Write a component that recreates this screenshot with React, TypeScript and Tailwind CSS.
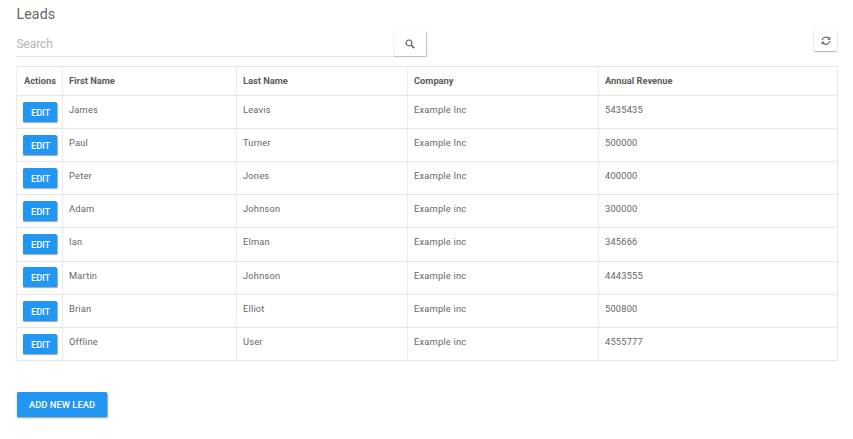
import React from "react";

const leads = [
  ["James", "Leavis", "Example Inc", "5435435"],
  ["Paul", "Turner", "Example Inc", "500000"],
  ["Peter", "Jones", "Example Inc", "400000"],
  ["Adam", "Johnson", "Example inc", "300000"],
  ["Ian", "Elman", "Example inc", "345666"],
  ["Martin", "Johnson", "Example inc", "4443555"],
  ["Brian", "Elliot", "Example inc", "500800"],
  ["Offline", "User", "Example inc", "4555777"],
];

function SearchIcon() {
  return (
    <svg width="10" height="10" viewBox="0 0 10 10" fill="none" stroke="#666" strokeWidth="1.2">
      <circle cx="4" cy="3.9" r="2.9" />
      <path d="M6.2 6.1 9.2 9.1" strokeWidth="1.5" />
    </svg>
  );
}

function RefreshIcon() {
  return (
    <svg width="10" height="10" viewBox="0 0 10 10" fill="none" stroke="#666" strokeWidth="1.2">
      <path d="M1.1 4.2A4 4 0 0 1 7.9 2.3M8.9 5.2A4 4 0 0 1 2.1 7.1" />
      <path d="M9.4.4v3.3H6.1zM.6 9V5.7h3.3z" fill="#666" stroke="none" />
    </svg>
  );
}

export default function App() {
  return (
    <main className="h-[439px] w-[853px] overflow-hidden bg-white pl-4 pt-1 font-[Roboto,sans-serif] text-[#666]">
      <h1 className="h-5 pl-[0.5px] text-[14.2px] leading-5 tracking-[0.1px]">Leads</h1>
      <div className="mt-1.5 flex h-[27px] w-[821px] items-start">
        <input
          placeholder="Search"
          className="h-[27px] w-[378px] border-b border-[#e4e4e4] pl-[0.5px] pt-0.5 text-[12px] tracking-[-0.1px] outline-none placeholder:text-[#b5b5b5]"
        />
        <button className="mt-px flex h-[25px] w-8 items-center justify-center rounded-[1px] bg-white shadow-[0_0_1px_rgba(0,0,0,0.25),0.5px_1px_1px_rgba(0,0,0,0.25)]">
          <SearchIcon />
        </button>
        <button className="ml-auto mt-px flex h-5 w-[23px] items-center justify-center rounded-[1px] bg-white shadow-[0_0_1px_rgba(0,0,0,0.2),0_1px_1.5px_rgba(0,0,0,0.3)]">
          <RefreshIcon />
        </button>
      </div>
      <table className="mt-[9px] w-[822px] table-fixed border-separate border-spacing-0 border-l border-t border-l-[#ededed] border-t-[#e6e6e6] text-left">
        <colgroup>
          <col className="w-[46px]" />
          <col className="w-[174px]" />
          <col className="w-[171px]" />
          <col className="w-[191px]" />
          <col />
        </colgroup>
        <thead>
          <tr className="h-[29px] text-[9.3px] leading-3 text-[#5c5c5c]">
            {["Actions", "First Name", "Last Name", "Company", "Annual Revenue"].map((name, i) => (
              <th key={name} className={`border-b border-r border-b-[#e6e6e6] border-r-[#ebebeb] p-0 font-bold ${i === 0 ? "pl-[7px]" : "pl-1.5"}`}>
                {name}
              </th>
            ))}
          </tr>
        </thead>
        <tbody>
          {leads.map((lead, row) => (
            <tr key={row} className={`align-top text-[9.3px] leading-3 tracking-[0.2px] ${row === 4 ? "h-[34px]" : "h-[33px]"}`}>
              <td className={`border-b border-r border-b-[#e6e6e6] border-r-[#ebebeb] p-0 pl-1.5 ${row === 5 ? "pt-[5px]" : "pt-1.5"}`}>
                <button className="block h-5 w-[34px] rounded-[1.5px] bg-[#2196f3] pl-px pt-px text-center text-[9.3px] font-medium leading-5 tracking-[-0.15px] text-white shadow-[0.5px_1px_1px_rgba(0,0,0,0.35)]">
                  EDIT
                </button>
              </td>
              {lead.map((value, i) => (
                <td key={i} className="border-b border-r border-b-[#e6e6e6] border-r-[#ebebeb] p-0 pl-1.5 pt-2">
                  {value}
                </td>
              ))}
            </tr>
          ))}
        </tbody>
      </table>
      <button className="ml-px mt-[31px] block h-[25px] w-[90px] rounded-[1.5px] bg-[#2196f3] text-center text-[9.3px] font-medium leading-[25px] tracking-[0.05px] text-white shadow-[0.5px_1px_1.5px_rgba(0,0,0,0.4)]">
        ADD NEW LEAD
      </button>
    </main>
  );
}
